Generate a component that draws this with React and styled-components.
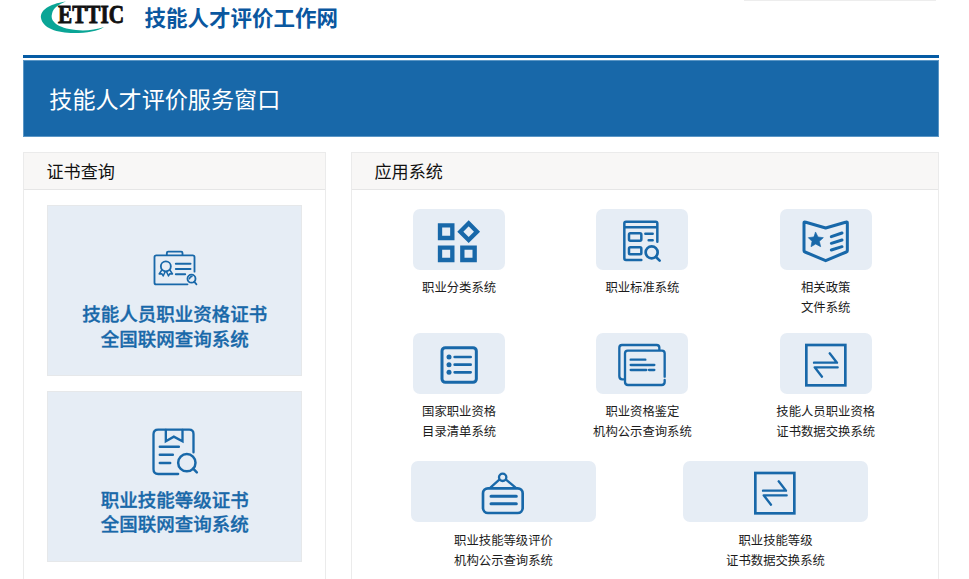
import React from 'react';
import styled, { createGlobalStyle } from 'styled-components';

const BLUE = '#1868a9';

const CertBadgeIcon = () => (
  <CardIcon viewBox="324.5 129 162 180">
    <path d="M464 215V171q0-5-5-5H349q-5 0-5 5v77q0 5 5 5h94" strokeWidth="5.5" />
    <path d="M381 165v-6q0-4 4-4h39q4 0 4 4v6" strokeWidth="5.5" />
    <circle cx="378" cy="199" r="15" strokeWidth="5.5" />
    <path d="M366 210l-8 12 8-1 4 7 6-13M390 210l8 12-8-1-4 7-6-13" strokeWidth="4.5" />
    <path d="M408 191h44M408 207h44M408 223h28" strokeWidth="6" />
    <circle cx="455" cy="236" r="12" strokeWidth="5.5" />
    <path d="M463 245l7 8M449 236q1-6 7-7" strokeWidth="5" />
  </CardIcon>
);

const CertSearchIcon = () => (
  <CardIcon viewBox="324.5 132 162 180">
    <path d="M461 205v-55q0-13-13-13h-93q-14 0-14 14v105q0 14 14 14h60" strokeWidth="7" />
    <path d="M378 138v34l24-14 26 14v-34" strokeWidth="7" strokeLinejoin="miter" />
    <path d="M360 188h57M360 212h39M360 237h31" strokeWidth="7.5" />
    <circle cx="441" cy="236" r="26" strokeWidth="7.5" />
    <path d="M460 254l11 11" strokeWidth="7.5" />
  </CardIcon>
);

const CategoryIcon = () => (
  <TileIcon viewBox="40 29 276 183">
    <g strokeWidth="13" strokeLinejoin="miter">
      <path d="M121 78h37v38h-37zM121 145h37v37h-37zM188 145h37v37h-37z" />
      <path d="M207 72l25 25-25 25-25-25z" />
    </g>
  </TileIcon>
);

const StandardIcon = () => (
  <TileIcon viewBox="35 29 276 183">
    <g strokeWidth="7.5">
      <path d="M219 127V72q0-5-5-5h-89q-5 0-5 5v105q0 5 5 5h46M120 84h99" />
      <rect x="134" y="102" width="37" height="22" rx="4" />
      <rect x="134" y="144" width="37" height="21" rx="4" />
      <path d="M183 103h22M193 123h12" />
      <circle cx="202" cy="159" r="18" strokeWidth="8" />
      <path d="M215 173l11 11" strokeWidth="8" />
    </g>
  </TileIcon>
);

const PolicyIcon = () => (
  <TileIcon viewBox="45 29 276 183">
    <path d="M120 68q-3-1-3 3v83q0 3 3 4l62 26 62-26q3-1 3-4V71q0-4-3-3l-62 18z" strokeWidth="9" />
    <path
      d="M152 99l7 14 16 2-12 11 4 16-15-8-14 8 3-16-11-11 16-2z"
      fill={BLUE}
      strokeWidth="2"
    />
    <path d="M199 112l32-11M199 132l32-10M199 152l32-10" strokeWidth="9" />
  </TileIcon>
);

const ListIcon = () => (
  <TileIcon viewBox="40 25 276 183">
    <rect x="127" y="69" width="103" height="104" rx="10" strokeWidth="9" />
    <path d="M165 97h48M165 120h48M165 143h48" strokeWidth="8" />
    <g fill={BLUE} stroke="none">
      <circle cx="148" cy="97" r="7.5" />
      <circle cx="148" cy="120" r="7.5" />
      <circle cx="148" cy="143" r="7.5" />
    </g>
  </TileIcon>
);

const PagesIcon = () => (
  <TileIcon viewBox="35 25 276 183">
    <g strokeWidth="7">
      <path d="M225 75v-6q0-8-8-8H113q-8 0-8 8v86q0 9 9 9h3" />
      <path d="M241 156V86q0-8-8-8H130q-8 0-8 8v86q0 9 9 9h101q9 0 9-9v-6" />
      <path d="M139 105h44M139 121h71M139 136h47M194 136h16" />
    </g>
  </TileIcon>
);

const ExchangeIcon = () => (
  <TileIcon viewBox="45 25 276 183">
    <rect x="124" y="61" width="117" height="121" strokeWidth="8" strokeLinejoin="miter" />
    <path d="M147 114h69l-22-28M218 128h-69l22 28" strokeWidth="7" />
  </TileIcon>
);

const SignIcon = () => (
  <TileIcon viewBox="174 32 276 183">
    <rect x="252" y="114" width="119" height="74" rx="15" strokeWidth="8" />
    <circle cx="311" cy="81" r="11" strokeWidth="7" />
    <path d="M301 88l-26 23M321 88l28 23" strokeWidth="7" />
    <path d="M276 138h76M276 160h76" strokeWidth="9" />
  </TileIcon>
);

const certs = [
  { Icon: CertBadgeIcon, lines: ['技能人员职业资格证书', '全国联网查询系统'] },
  { Icon: CertSearchIcon, lines: ['职业技能等级证书', '全国联网查询系统'] },
];

const systems = [
  { Icon: CategoryIcon, lines: ['职业分类系统'] },
  { Icon: StandardIcon, lines: ['职业标准系统'] },
  { Icon: PolicyIcon, lines: ['相关政策', '文件系统'] },
  { Icon: ListIcon, lines: ['国家职业资格', '目录清单系统'] },
  { Icon: PagesIcon, lines: ['职业资格鉴定', '机构公示查询系统'] },
  { Icon: ExchangeIcon, lines: ['技能人员职业资格', '证书数据交换系统'] },
];

const wideSystems = [
  { Icon: SignIcon, lines: ['职业技能等级评价', '机构公示查询系统'] },
  { Icon: ExchangeIcon, lines: ['职业技能等级', '证书数据交换系统'] },
];

const System = ({ Icon, lines, wide }) => (
  <SystemLink>
    <Tile $wide={wide}>
      <Icon />
    </Tile>
    <Label $wide={wide}>
      {lines.map(line => (
        <div key={line}>{line}</div>
      ))}
    </Label>
  </SystemLink>
);

const App = () => (
  <>
    <GlobalStyle />
    <Page>
      <Header>
        <Logo viewBox="0 0 90 36">
          <path d="M26 1.5C8 4 0 11 1 18c1.5 10 16 15 33 15 13 0 24-2 30-6-9 3-19 4-28 3C17 28 10 21 12 14 13 8 19 4 26 1.5z" />
          <text x="18" y="22.5" textLength="66" lengthAdjust="spacingAndGlyphs">
            ETTIC
          </text>
        </Logo>
        <SiteName>技能人才评价工作网</SiteName>
        <SearchEdge />
      </Header>
      <Rule />
      <Banner>技能人才评价服务窗口</Banner>
      <Columns>
        <Panel>
          <PanelTitle>证书查询</PanelTitle>
          <CardList>
            {certs.map(({ Icon, lines }) => (
              <Card key={lines[0]}>
                <Icon />
                <CardText>
                  {lines.map(line => (
                    <div key={line}>{line}</div>
                  ))}
                </CardText>
              </Card>
            ))}
          </CardList>
        </Panel>
        <Panel>
          <PanelTitle>应用系统</PanelTitle>
          <SystemGrid>
            {systems.map(item => (
              <System key={item.lines[0]} {...item} />
            ))}
          </SystemGrid>
          <WideGrid>
            {wideSystems.map(item => (
              <System key={item.lines[0]} {...item} wide />
            ))}
          </WideGrid>
        </Panel>
      </Columns>
    </Page>
  </>
);

export default App;

const GlobalStyle = createGlobalStyle`
  * {
    box-sizing: border-box;
  }

  body {
    margin: 0;
    overflow: hidden;
    background: #fff;
    color: #222;
    font-family: 'Noto Sans CJK SC', 'Noto Sans', sans-serif;
  }
`;

const Page = styled.div`
  height: 579px;
  padding: 0 30px 0 23px;
  overflow: hidden;
`;

const Header = styled.header`
  display: flex;
  align-items: flex-start;
  height: 55px;
  padding-left: 16.5px;
`;

const Logo = styled.svg`
  width: 90px;
  height: 36px;
  margin-right: 15px;
  overflow: visible;

  path {
    fill: #0aa596;
  }

  text {
    fill: #111;
    stroke: #111;
    stroke-width: 0.9px;
    font: bold 25px 'Liberation Serif', serif;
  }
`;

const SiteName = styled.div`
  color: #0a579f;
  font-size: 21.5px;
  font-weight: 700;
  line-height: 33px;
  white-space: nowrap;
`;

const SearchEdge = styled.div`
  width: 192px;
  height: 1px;
  margin-left: auto;
  margin-right: 3px;
  background: #ededed;
`;

const Rule = styled.div`
  height: 3px;
  background: #055ba4;
`;

const Banner = styled.div`
  height: 77.5px;
  margin-top: 1.5px;
  padding-left: 25.3px;
  border: 1px solid #5b96c5;
  background: ${BLUE};
  color: #fff;
  font-size: 23.1px;
  line-height: 74.5px;
`;

const Columns = styled.div`
  display: grid;
  grid-template-columns: 303.4px 588px;
  column-gap: 24.6px;
  height: 500px;
  margin-top: 15px;
`;

const Panel = styled.section`
  border: 1px solid #ebebeb;
`;

const PanelTitle = styled.h2`
  height: 37px;
  margin: 0;
  padding-left: 22.5px;
  border-bottom: 1px solid #e6e6e6;
  background: #f8f7f6;
  color: #111;
  font-size: 17.1px;
  font-weight: 400;
  line-height: 35.5px;
`;

const CardList = styled.div`
  display: flex;
  flex-direction: column;
  gap: 14.5px;
  padding: 15px 23.4px;
`;

const Card = styled.a`
  display: flex;
  flex-direction: column;
  align-items: center;
  height: 171px;
  padding-top: 36.5px;
  border: 1px solid #e6e8ea;
  background: #e6edf5;
`;

const CardText = styled.div`
  margin-top: -1.5px;
  color: ${BLUE};
  font-size: 18.5px;
  font-weight: 500;
  line-height: 24.5px;
  text-align: center;
  -webkit-text-stroke: 0.35px ${BLUE};
`;

const Icon = styled.svg`
  flex: none;
  fill: none;
  stroke: ${BLUE};
  stroke-linecap: round;
  stroke-linejoin: round;
`;

const CardIcon = styled(Icon)`
  width: 54px;
  height: 60px;
`;

const TileIcon = styled(Icon)`
  width: 92px;
  height: 61px;
`;

const SystemGrid = styled.div`
  display: grid;
  grid-template-columns: repeat(3, 183.3px);
  grid-auto-rows: 124px;
  padding: 19px 0 0 15.5px;
`;

const WideGrid = styled.div`
  display: grid;
  grid-template-columns: repeat(2, 272px);
  padding: 4px 0 0 15.5px;
`;

const SystemLink = styled.a`
  display: flex;
  flex-direction: column;
  align-items: center;
`;

const Tile = styled.div`
  display: flex;
  justify-content: center;
  width: ${props => (props.$wide ? '185px' : '92px')};
  height: 61px;
  border-radius: 7px;
  background: #e6edf5;
`;

const Label = styled.div`
  margin-top: ${props => (props.$wide ? '8px' : '7px')};
  color: #1c1c1c;
  font-size: 12.35px;
  line-height: 20px;
  text-align: center;
`;
